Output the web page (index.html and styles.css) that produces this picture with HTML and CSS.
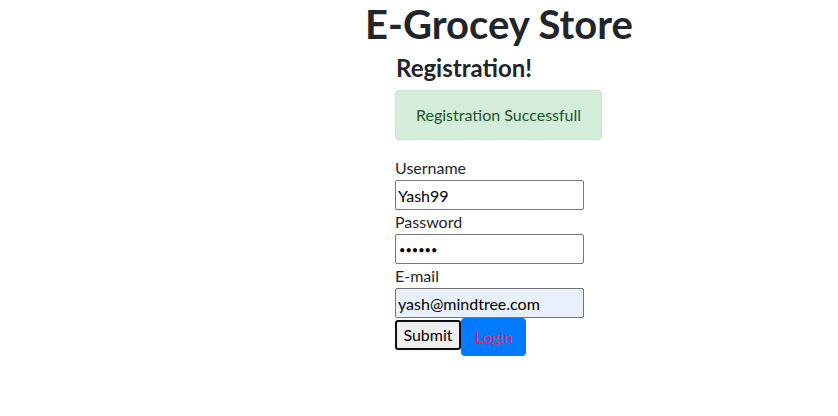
FILE: index.html
```html
<!DOCTYPE html>
<html>
<head>
<meta charset="utf-8">
<link rel="stylesheet" href="styles.css">
</head>
<body>
<h1 class="title">E-Grocey Store</h1>
<div class="panel">
  <h4 class="subtitle">Registration!</h4>
  <div class="alert">Registration Successfull</div>
  <form class="form">
    <label class="label" for="u">Username</label>
    <input class="field" id="u" type="text" value="Yash99">
    <label class="label" for="p">Password</label>
    <input class="field secret" id="p" type="password" value="yash99">
    <label class="label" for="e">E-mail</label>
    <input class="field autofill" id="e" type="text" value="yash@mindtree.com">
    <div class="actions">
      <button class="submit" type="button">Submit</button>
      <a class="login" href="#">Login</a>
    </div>
  </form>
</div>
</body>
</html>
```
FILE: styles.css
```css
html, body {
  margin: 0;
  padding: 0;
  background: #fff;
}
body {
  font-family: Lato, "Noto Sans", sans-serif;
  font-size: 16px;
  line-height: 24px;
  color: #212529;
}
.title {
  margin: 0 0 5px 365px;
  font-size: 40px;
  font-weight: 700;
  line-height: 48px;
  color: #212529;
}
.panel {
  margin-left: 395px;
}
.subtitle {
  margin: 0 0 8px 1px;
  font-size: 24px;
  font-weight: 700;
  line-height: 29px;
}
.alert {
  display: inline-block;
  padding: 12px 20px;
  border: 1px solid #c3e6cb;
  border-radius: 4px;
  background: #d4edda;
  color: #155724;
  margin-bottom: 16px;
}
.form {
  display: flex;
  flex-direction: column;
  align-items: flex-start;
}
.label {
  display: block;
  line-height: 24px;
}
.field {
  box-sizing: border-box;
  width: 189px;
  height: 30px;
  margin: 0;
  padding: 1px 2px;
  border: 1px solid #767676;
  border-radius: 2px;
  background: #fff;
  font-family: Lato, "Noto Sans", sans-serif;
  font-size: 16px;
  color: #000;
}
.secret {
  font-size: 11px;
  padding-left: 3px;
}
.autofill {
  background: #e8f0fe;
}
.actions {
  display: flex;
  align-items: flex-start;
}
.submit {
  box-sizing: border-box;
  width: 66px;
  height: 30px;
  margin-top: 2px;
  padding: 0;
  border: 2px solid #101010;
  border-radius: 3px;
  background: #efefef;
  font-family: Lato, "Noto Sans", sans-serif;
  font-size: 16px;
  line-height: 24px;
  color: #000;
}
.login {
  box-sizing: border-box;
  display: block;
  width: 65px;
  height: 38px;
  padding: 6px 0;
  border-radius: 4px;
  background: #007bff;
  color: #f5206e;
  text-align: center;
  text-decoration: none;
  line-height: 26px;
}
```
